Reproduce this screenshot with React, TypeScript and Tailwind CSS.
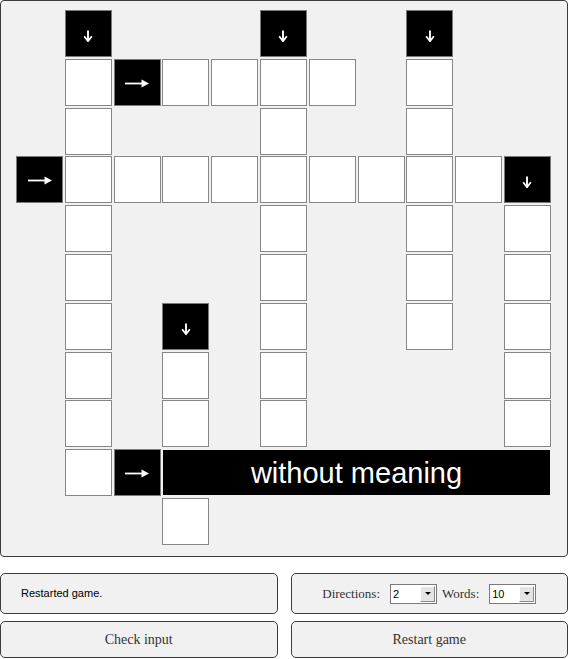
import React from 'react';

type Kind = 'w' | 'd' | 'r';
type Cell = { r: number; c: number; k: Kind };

// grid map: '.' empty, 'w' white, 'd' clue pointing down, 'r' clue pointing right
// row 9 after the clue is covered by the tooltip bar
const MAP = [
  '.d...d..d..',
  '.wrwwww.w..',
  '.w...w..w..',
  'rwwwwwwwwwd',
  '.w...w..w.w',
  '.w...w..w.w',
  '.w.d.w..w.w',
  '.w.w.w....w',
  '.w.w.w....w',
  '.wr........',
  '...w.......',
];

const CELLS: Cell[] = MAP.flatMap((row, r) =>
  row.split('').flatMap((ch, c) => (ch === '.' ? [] : [{ r, c, k: ch as Kind }]))
);

const DownArrow = () => (
  <svg width="10" height="12" viewBox="0 0 10 12" className="mt-[5px]">
    <path d="M5 0.5V11" stroke="white" strokeWidth="1.9" fill="none" />
    <path d="M1.2 6.3L5 11.2L8.8 6.3" stroke="white" strokeWidth="1.8" fill="none" />
  </svg>
);

const RightArrow = () => (
  <svg width="24" height="9" viewBox="0 0 24 9" className="mt-[2px]">
    <path d="M0 4.5H18" stroke="white" strokeWidth="1.8" fill="none" />
    <path d="M16.5 0.6L24 4.5L16.5 8.4Z" fill="white" />
  </svg>
);

const FakeSelect: React.FC<{ value: string }> = ({ value }) => (
  <div className="flex h-[20px] w-[47px] items-stretch border border-[#7a7a7a] bg-white">
    <span className="flex-1 pl-[2px] text-[11px] leading-[18px] text-black font-['Liberation_Sans',Arial,sans-serif]">
      {value}
    </span>
    <span className="m-[1px] flex w-[15px] items-center justify-center border border-t-white border-l-white border-b-[#8a8a8a] border-r-[#8a8a8a] bg-[#e4e4e4]">
      <span className="h-0 w-0 border-l-[3px] border-r-[3px] border-t-[3px] border-l-transparent border-r-transparent border-t-black" />
    </span>
  </div>
);

export default function App() {
  return (
    <div className="w-[568px] bg-white">
      {/* board */}
      <div className="h-[557px] w-[568px] rounded-[4px] border border-[#3c3c3c] bg-[#f0f1f0] pl-[15px] pt-[9px]">
        <div className="relative grid grid-cols-[repeat(11,47px)] grid-rows-[repeat(11,47px)] gap-[1.8px]">
          {CELLS.map((cell) => (
            <div
              key={`${cell.r}-${cell.c}`}
              style={{ gridRow: cell.r + 1, gridColumn: cell.c + 1 }}
              className={
                cell.k === 'w'
                  ? 'border border-[#868686] bg-white'
                  : 'flex items-center justify-center border border-[#7a7a7a] bg-black'
              }
            >
              {cell.k === 'd' && <DownArrow />}
              {cell.k === 'r' && <RightArrow />}
            </div>
          ))}

          {/* clue tooltip over the active word */}
          <div className="absolute left-[147px] top-[440px] flex h-[45px] w-[387px] items-center justify-center bg-black pt-[2px] text-[29px] text-white font-['Liberation_Sans',Arial,sans-serif]">
            without meaning
          </div>
        </div>
      </div>

      {/* controls */}
      <div className="mt-[16px] grid grid-cols-2 gap-x-[13px] gap-y-[7px]">
        <div className="flex h-[41px] items-center rounded-[5px] border border-[#3c3c3c] bg-[#f0f1f0] pl-[20px] text-[11px] text-black font-['Liberation_Sans',Arial,sans-serif]">
          Restarted game.
        </div>
        <div className="flex h-[41px] items-center justify-center rounded-[5px] border border-[#3c3c3c] bg-[#f0f1f0] text-[13px] text-[#333] font-['Liberation_Serif','Times_New_Roman',serif]">
          <span className="mr-[10px]">Directions:</span>
          <FakeSelect value="2" />
          <span className="ml-[5px] mr-[10px]">Words:</span>
          <FakeSelect value="10" />
        </div>
        <button className="h-[37px] rounded-[5px] border border-[#3c3c3c] bg-[#f0f1f0] text-[14px] text-[#333] font-['Liberation_Serif','Times_New_Roman',serif]">
          Check input
        </button>
        <button className="h-[37px] rounded-[5px] border border-[#3c3c3c] bg-[#f0f1f0] text-[14px] text-[#333] font-['Liberation_Serif','Times_New_Roman',serif]">
          Restart game
        </button>
      </div>
    </div>
  );
}
